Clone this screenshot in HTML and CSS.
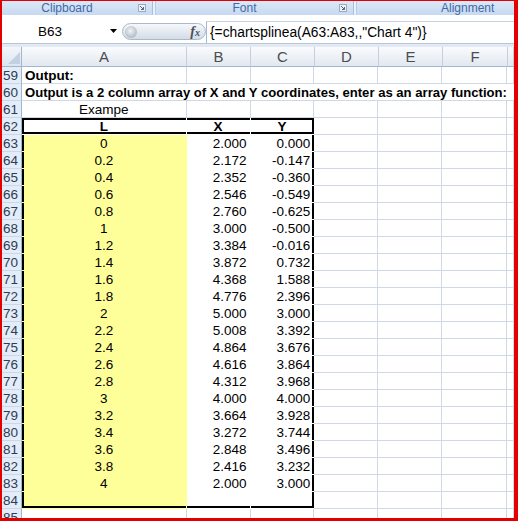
FILE: index.html
```html
<!DOCTYPE html>
<html lang="en">
<head>
    <meta charset="UTF-8">
    <title>chartsplinea output</title>
    <link rel="stylesheet" href="styles.css">
</head>
<body>
    <div class="window">
        <div class="ribbon">
            <div class="grp grp-clip"><span class="lbl">Clipboard</span><svg class="launch" viewBox="0 0 8 8"><rect x="0.5" y="0.5" width="7" height="7" fill="#eef2f8" stroke="#9aabc2"/><path d="M2 2 L5.5 5.5 M5.5 3 V5.5 H3" stroke="#59677a" fill="none"/></svg></div>
            <div class="sep"></div>
            <div class="grp grp-font"><span class="lbl">Font</span><svg class="launch" viewBox="0 0 8 8"><rect x="0.5" y="0.5" width="7" height="7" fill="#eef2f8" stroke="#9aabc2"/><path d="M2 2 L5.5 5.5 M5.5 3 V5.5 H3" stroke="#59677a" fill="none"/></svg></div>
            <div class="sep"></div>
            <div class="grp grp-align"><span class="lbl">Alignment</span></div>
        </div>

        <div class="fbar">
            <div class="namebox">
                <span class="ref">B63</span>
                <svg class="drop" viewBox="0 0 7 4"><path d="M0 0 H7 L3.5 4 Z" fill="#000"/></svg>
            </div>
            <div class="pill">
                <span class="dimple"></span>
                <span class="fx"><i>f</i><small>x</small></span>
            </div>
            <div class="formula">{=chartsplinea(A63:A83,,"Chart 4")}</div>
        </div>
        <div class="gap"></div>

        <div class="heads">
            <div class="corner"><svg viewBox="0 0 12 12"><path d="M12 0 V12 H0 Z" fill="#c3d0e0"/></svg></div>
            <div class="hd ca">A</div>
            <div class="hd cb">B</div>
            <div class="hd cc">C</div>
            <div class="hd cd">D</div>
            <div class="hd ce">E</div>
            <div class="hd cf">F</div>
            <div class="hd cg"></div>
        </div>

        <div class="row"><div class="rh">59</div><div class="cell ca bold">Output:</div><div class="cell cb"></div><div class="cell cc"></div><div class="cell cd"></div><div class="cell ce"></div><div class="cell cf"></div><div class="cell cg"></div></div>
        <div class="row"><div class="rh">60</div><div class="cell span bold">Output is a 2 column array of X and Y coordinates, enter as an array function:</div></div>
        <div class="row"><div class="rh">61</div><div class="cell ca mid">Exampe</div><div class="cell cb"></div><div class="cell cc"></div><div class="cell cd"></div><div class="cell ce"></div><div class="cell cf"></div><div class="cell cg"></div></div>
        <div class="row"><div class="rh">62</div><div class="cell ca in mid bold k-tbl">L</div><div class="cell cb in mid bold k-tb">X</div><div class="cell cc in mid bold k-tbr">Y</div><div class="cell cd"></div><div class="cell ce"></div><div class="cell cf"></div><div class="cell cg"></div></div>
        <div class="row"><div class="rh">63</div><div class="cell ca in yel mid k-l">0</div><div class="cell cb in num">2.000</div><div class="cell cc in num k-r">0.000</div><div class="cell cd"></div><div class="cell ce"></div><div class="cell cf"></div><div class="cell cg"></div></div>
        <div class="row"><div class="rh">64</div><div class="cell ca in yel mid k-l">0.2</div><div class="cell cb in num">2.172</div><div class="cell cc in num k-r">-0.147</div><div class="cell cd"></div><div class="cell ce"></div><div class="cell cf"></div><div class="cell cg"></div></div>
        <div class="row"><div class="rh">65</div><div class="cell ca in yel mid k-l">0.4</div><div class="cell cb in num">2.352</div><div class="cell cc in num k-r">-0.360</div><div class="cell cd"></div><div class="cell ce"></div><div class="cell cf"></div><div class="cell cg"></div></div>
        <div class="row"><div class="rh">66</div><div class="cell ca in yel mid k-l">0.6</div><div class="cell cb in num">2.546</div><div class="cell cc in num k-r">-0.549</div><div class="cell cd"></div><div class="cell ce"></div><div class="cell cf"></div><div class="cell cg"></div></div>
        <div class="row"><div class="rh">67</div><div class="cell ca in yel mid k-l">0.8</div><div class="cell cb in num">2.760</div><div class="cell cc in num k-r">-0.625</div><div class="cell cd"></div><div class="cell ce"></div><div class="cell cf"></div><div class="cell cg"></div></div>
        <div class="row"><div class="rh">68</div><div class="cell ca in yel mid k-l">1</div><div class="cell cb in num">3.000</div><div class="cell cc in num k-r">-0.500</div><div class="cell cd"></div><div class="cell ce"></div><div class="cell cf"></div><div class="cell cg"></div></div>
        <div class="row"><div class="rh">69</div><div class="cell ca in yel mid k-l">1.2</div><div class="cell cb in num">3.384</div><div class="cell cc in num k-r">-0.016</div><div class="cell cd"></div><div class="cell ce"></div><div class="cell cf"></div><div class="cell cg"></div></div>
        <div class="row"><div class="rh">70</div><div class="cell ca in yel mid k-l">1.4</div><div class="cell cb in num">3.872</div><div class="cell cc in num k-r">0.732</div><div class="cell cd"></div><div class="cell ce"></div><div class="cell cf"></div><div class="cell cg"></div></div>
        <div class="row"><div class="rh">71</div><div class="cell ca in yel mid k-l">1.6</div><div class="cell cb in num">4.368</div><div class="cell cc in num k-r">1.588</div><div class="cell cd"></div><div class="cell ce"></div><div class="cell cf"></div><div class="cell cg"></div></div>
        <div class="row"><div class="rh">72</div><div class="cell ca in yel mid k-l">1.8</div><div class="cell cb in num">4.776</div><div class="cell cc in num k-r">2.396</div><div class="cell cd"></div><div class="cell ce"></div><div class="cell cf"></div><div class="cell cg"></div></div>
        <div class="row"><div class="rh">73</div><div class="cell ca in yel mid k-l">2</div><div class="cell cb in num">5.000</div><div class="cell cc in num k-r">3.000</div><div class="cell cd"></div><div class="cell ce"></div><div class="cell cf"></div><div class="cell cg"></div></div>
        <div class="row"><div class="rh">74</div><div class="cell ca in yel mid k-l">2.2</div><div class="cell cb in num">5.008</div><div class="cell cc in num k-r">3.392</div><div class="cell cd"></div><div class="cell ce"></div><div class="cell cf"></div><div class="cell cg"></div></div>
        <div class="row"><div class="rh">75</div><div class="cell ca in yel mid k-l">2.4</div><div class="cell cb in num">4.864</div><div class="cell cc in num k-r">3.676</div><div class="cell cd"></div><div class="cell ce"></div><div class="cell cf"></div><div class="cell cg"></div></div>
        <div class="row"><div class="rh">76</div><div class="cell ca in yel mid k-l">2.6</div><div class="cell cb in num">4.616</div><div class="cell cc in num k-r">3.864</div><div class="cell cd"></div><div class="cell ce"></div><div class="cell cf"></div><div class="cell cg"></div></div>
        <div class="row"><div class="rh">77</div><div class="cell ca in yel mid k-l">2.8</div><div class="cell cb in num">4.312</div><div class="cell cc in num k-r">3.968</div><div class="cell cd"></div><div class="cell ce"></div><div class="cell cf"></div><div class="cell cg"></div></div>
        <div class="row"><div class="rh">78</div><div class="cell ca in yel mid k-l">3</div><div class="cell cb in num">4.000</div><div class="cell cc in num k-r">4.000</div><div class="cell cd"></div><div class="cell ce"></div><div class="cell cf"></div><div class="cell cg"></div></div>
        <div class="row"><div class="rh">79</div><div class="cell ca in yel mid k-l">3.2</div><div class="cell cb in num">3.664</div><div class="cell cc in num k-r">3.928</div><div class="cell cd"></div><div class="cell ce"></div><div class="cell cf"></div><div class="cell cg"></div></div>
        <div class="row"><div class="rh">80</div><div class="cell ca in yel mid k-l">3.4</div><div class="cell cb in num">3.272</div><div class="cell cc in num k-r">3.744</div><div class="cell cd"></div><div class="cell ce"></div><div class="cell cf"></div><div class="cell cg"></div></div>
        <div class="row"><div class="rh">81</div><div class="cell ca in yel mid k-l">3.6</div><div class="cell cb in num">2.848</div><div class="cell cc in num k-r">3.496</div><div class="cell cd"></div><div class="cell ce"></div><div class="cell cf"></div><div class="cell cg"></div></div>
        <div class="row"><div class="rh">82</div><div class="cell ca in yel mid k-l">3.8</div><div class="cell cb in num">2.416</div><div class="cell cc in num k-r">3.232</div><div class="cell cd"></div><div class="cell ce"></div><div class="cell cf"></div><div class="cell cg"></div></div>
        <div class="row"><div class="rh">83</div><div class="cell ca in yel mid k-l">4</div><div class="cell cb in num">2.000</div><div class="cell cc in num k-r">3.000</div><div class="cell cd"></div><div class="cell ce"></div><div class="cell cf"></div><div class="cell cg"></div></div>
        <div class="row"><div class="rh">84</div><div class="cell ca in yel k-bl"></div><div class="cell cb in k-b"></div><div class="cell cc in k-br"></div><div class="cell cd"></div><div class="cell ce"></div><div class="cell cf"></div><div class="cell cg"></div></div>
        <div class="row"><div class="rh">85</div><div class="cell ca"></div><div class="cell cb"></div><div class="cell cc"></div><div class="cell cd"></div><div class="cell ce"></div><div class="cell cf"></div><div class="cell cg"></div></div>
    </div>
</body>
</html>
```

FILE: styles.css
```css
:root {
    --frame: #e30000;
    --grid: #d0d7e5;
    --head-line: #9eb6ce;
    --ribbon-text: #3f6aa6;
    --fill: #ffff99;
}

* {
    box-sizing: border-box;
}

body {
    margin: 0;
    font-family: "Liberation Sans", Arial, sans-serif;
    background: #fff;
}

.window {
    width: 518px;
    height: 521px;
    border-style: solid;
    border-color: var(--frame);
    border-width: 1px 4px 3px 2px;
    overflow: hidden;
    background: #fff;
}

/* ribbon group captions */
.ribbon {
    display: flex;
    height: 14px;
    font-size: 12px;
    line-height: 14px;
    color: var(--ribbon-text);
    background: linear-gradient(#dce8f7, #c7d9f0);
}

.grp {
    display: flex;
    align-items: center;
}

.grp .lbl {
    flex: 1;
    text-align: center;
}

.grp-clip {
    width: 150px;
}

.grp-font {
    width: 197px;
}

.grp-align {
    flex: 1;
    padding-left: 84px;
}

.grp-align .lbl {
    text-align: left;
}

.launch {
    width: 8px;
    height: 8px;
    margin: 0 6px 0 6px;
}

.sep {
    width: 4px;
    border-left: 1px solid #a9bedb;
    border-right: 1px solid #b8cbe3;
    background: #eaf1fa;
}

/* formula bar */
.fbar {
    display: flex;
    align-items: center;
    height: 28px;
    background: #fff;
}

.namebox {
    display: flex;
    align-items: center;
    width: 120px;
    height: 100%;
    padding-top: 4px;
}

.ref {
    width: 96px;
    text-align: center;
    font-size: 13.5px;
}

.drop {
    width: 7px;
    height: 4px;
    margin-left: 12px;
}

.pill {
    display: flex;
    align-items: center;
    justify-content: space-between;
    width: 84px;
    height: 17px;
    margin-top: 5px;
    padding: 0 5px 0 2px;
    border: 1px solid #a9b8cc;
    border-radius: 9px;
    background: linear-gradient(#f6f8fb, #d3dce8);
}

.dimple {
    width: 12px;
    height: 12px;
    border-radius: 50%;
    background: radial-gradient(circle at 45% 40%, #f4f6f8, #b7c0cb 65%, #98a3b1);
}

.fx {
    font-family: "Liberation Serif", serif;
    font-weight: bold;
    font-size: 14px;
    color: #4a4f57;
}

.fx small {
    font-size: 10px;
    font-style: italic;
}

.formula {
    flex: 1;
    align-self: stretch;
    margin-top: 6px;
    padding: 3px 0 0 3px;
    border-left: 1px solid #a5b8d0;
    border-top: 1px solid #c6d3e4;
    font-size: 13.8px;
    white-space: nowrap;
    overflow: hidden;
}

.gap {
    height: 4px;
    border-top: 1px solid #b7c6d9;
    background: #e2e9f2;
}

/* column headers */
.heads {
    display: flex;
    height: 20px;
}

.corner {
    width: 20px;
    padding: 5px 2px 2px 6px;
    border-right: 1px solid var(--head-line);
    border-bottom: 1px solid var(--head-line);
    background: linear-gradient(#f3f6fa, #dde5ef);
}

.corner svg {
    display: block;
    width: 12px;
    height: 12px;
}

.hd {
    height: 20px;
    border-right: 1px solid #c4cfdd;
    border-bottom: 1px solid var(--head-line);
    background: linear-gradient(#f9fbfd, #e2e8f0);
    text-align: center;
    font-size: 15px;
    line-height: 19px;
    color: #4d4d4d;
}

/* sheet rows */
.row {
    display: flex;
    height: 17px;
}

.rh {
    width: 20px;
    padding-left: 1px;
    border-right: 1px solid var(--head-line);
    border-bottom: 1px solid #c9d7e9;
    background: #e4ecf7;
    font-size: 13.5px;
    line-height: 17px;
    color: #2c3d57;
}

.cell {
    height: 17px;
    padding: 0 3px;
    border-right: 1px solid var(--grid);
    border-bottom: 1px solid var(--grid);
    font-size: 13.5px;
    line-height: 17px;
    white-space: nowrap;
    overflow: hidden;
}

.ca { width: 165px; }
.cb { width: 64px; }
.cc { width: 64px; }
.cd { width: 64px; }
.ce { width: 64px; }
.cf { width: 65px; }
.cg { flex: 1; }

.span {
    flex: 1;
    border-right: none;
    font-size: 13.1px;
}

.bold { font-weight: bold; }
.mid { text-align: center; }
.num { text-align: right; }

.in {
    border-color: transparent;
}

.yel {
    background: var(--fill);
}

/* thick outline around the result block */
.k-l { box-shadow: inset 2px 0 #000; }
.k-r { box-shadow: inset -2px 0 #000; }
.k-b { box-shadow: inset 0 -2px #000; }
.k-bl { box-shadow: inset 2px 0 #000, inset 0 -2px #000; }
.k-br { box-shadow: inset -2px 0 #000, inset 0 -2px #000; }
.k-tb { box-shadow: inset 0 2px #000, inset 0 -2px #000; }
.k-tbl { box-shadow: inset 0 2px #000, inset 0 -2px #000, inset 2px 0 #000; }
.k-tbr { box-shadow: inset 0 2px #000, inset 0 -2px #000, inset -2px 0 #000; }

.k-r,
.k-br,
.k-tbr {
    border-right: 0;
    padding-right: 4px;
}
```
